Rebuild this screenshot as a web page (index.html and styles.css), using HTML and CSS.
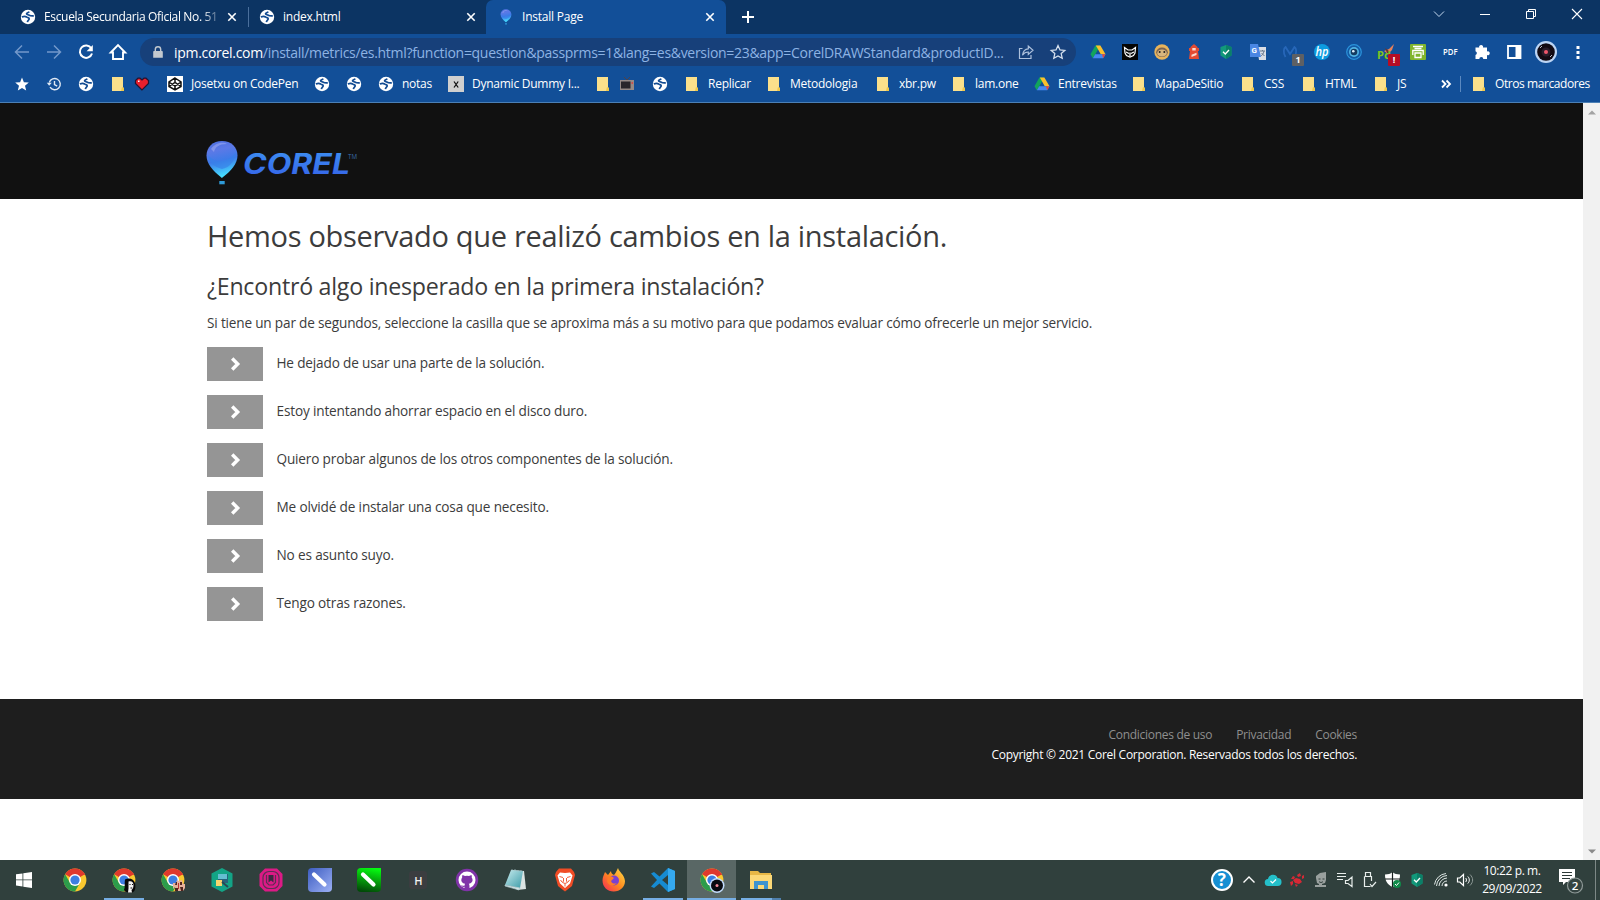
FILE: index.html
```html
<!DOCTYPE html>
<html lang="es">
<head>
<meta charset="utf-8">
<title>Install Page</title>
<link rel="stylesheet" href="styles.css">
</head>
<body>
<svg class="defs" width="0" height="0">
  <defs>
    <linearGradient id="balloonFill" x1="0" y1="0" x2="0.2" y2="1"><stop offset="0" stop-color="#4b6fe0"/><stop offset=".3" stop-color="#5c79e6"/><stop offset=".6" stop-color="#3d7be8"/><stop offset="1" stop-color="#45dcff"/></linearGradient>
    <linearGradient id="corelFill" x1="0" y1="0" x2="0" y2="1"><stop offset="0" stop-color="#3d93f2"/><stop offset="1" stop-color="#3560e8"/></linearGradient>
    <linearGradient id="noteFill" x1="0" y1="0" x2="1" y2="1"><stop offset="0" stop-color="#c8ecee"/><stop offset="1" stop-color="#3c9ba8"/></linearGradient>
    <linearGradient id="foxFill" x1="1" y1="0" x2="0" y2="1"><stop offset="0" stop-color="#ffe14a"/><stop offset=".5" stop-color="#ff8a1e"/><stop offset="1" stop-color="#f5245a"/></linearGradient>
    <linearGradient id="greenFill" x1="0.6" y1="0" x2="0.4" y2="1"><stop offset="0" stop-color="#04fb10"/><stop offset=".45" stop-color="#06a80c"/><stop offset="1" stop-color="#024a08"/></linearGradient>
    <linearGradient id="violetFill" x1="0" y1="0" x2="1" y2="1"><stop offset="0" stop-color="#3c5cc0"/><stop offset="1" stop-color="#9db1f5"/></linearGradient>
  </defs>
  <symbol id="globe" viewBox="0 0 16 16"><circle cx="8" cy="8" r="7.200" fill="#fff"/><path d="M1.800 8C4 7 5.600 7.200 6.600 8c1 1 2.600 .4 2.600 1.800C9.200 11.200 7.600 11 7.400 13.200M9.200 2.600C8.600 3.800 6.600 3.600 6.500 4.800c0 1 1.800 .8 2.800 1.500 1 .7 2.200 .8 4.500 .6" fill="none" stroke="#124b92" stroke-width="1.700"/></symbol>
  <symbol id="folder" viewBox="0 0 16 16"><path d="M2 1h11v10l1 1.500V15H2z" fill="#fbe08b"/><path d="M12 11l2 1v3h-3z" fill="#efc84c"/></symbol>
  <symbol id="drive" viewBox="0 0 16 16"><path d="M5.400 1.500h4.800L5 10.700 2.800 14.200.5 10.200z" fill="#12a45c"/><path d="M5.800 1.500h4.600l5.100 8.800h-4.700z" fill="#fbc02d"/><path d="M5.200 10.300h10.300l-2.300 4H2.800z" fill="#4688f1"/><path d="M12 10.300h3.500l-2.300 4z" fill="#e8473a"/></symbol>
  <symbol id="close" viewBox="0 0 10 10"><path d="M1.300 1.300l7.400 7.400M8.700 1.300L1.300 8.700" stroke="#fff" stroke-width="1.600"/></symbol>
  <symbol id="balloon" viewBox="0 0 32 46"><path d="M16 1C7 1 .5 7 .5 15.500.5 24 7 31 15.900 38 25 31 31.500 24 31.500 15.500 31.500 7 25 1 16 1z" fill="url(#balloonFill)"/><path d="M2 15c8 10 20 8 28-3-1 8-5 15-14 17C8 27 3 22 2 15z" fill="#377fe8" opacity=".65"/><path d="M5 9c5-7 13-7 16-5-8 0-12 3-13 8z" fill="#a9b1f3" opacity=".5"/><path d="M13.300 41h5.400v3.300h-5.400z" fill="#2f9bd8"/></symbol>
  <symbol id="chrome" viewBox="0 0 24 24"><circle cx="12" cy="12" r="11.400" fill="#f9c82f"/><path d="M12 12L2.100 6.300A11.400 11.400 0 0 1 21.900 6.300z" fill="#e0392d"/><path d="M2.100 6.300A11.400 11.400 0 0 0 12 23.400l5-8.700H7z" fill="#2c9c4b"/><path d="M12 6.300h9.900" stroke="#e0392d"/><circle cx="12" cy="12" r="6" fill="#fff"/><circle cx="12" cy="12" r="4.600" fill="#3d7ee2"/></symbol>
  <symbol id="shield" viewBox="0 0 16 16"><path d="M8 1l5.500 2v8.500L8 15l-5.500-3.500V3z" fill="#12997b"/><path d="M8 1l5.500 2v8.500L8 15z" fill="#0b8068"/><path d="M5 7.800l2.300 2.200L11 6" fill="none" stroke="#fff" stroke-width="1.300"/></symbol>
</svg>

<div class="browser">
  <div class="tabs">
    <div class="tab tab-first"><svg class="i16"><use href="#globe"/></svg><span class="tab-title fade">Escuela Secundaria Oficial No. 51</span><svg class="x"><use href="#close"/></svg></div>
    <div class="tab tab-second"><svg class="i16"><use href="#globe"/></svg><span class="tab-title">index.html</span><svg class="x"><use href="#close"/></svg></div>
    <div class="tab tab-active"><svg class="i16"><use href="#balloon"/></svg><span class="tab-title">Install Page</span><svg class="x"><use href="#close"/></svg></div>
    <svg class="plus" viewBox="0 0 12 12"><path d="M6 0v12M0 6h12" stroke="#fff" stroke-width="2"/></svg>
    <div class="window-buttons">
      <svg viewBox="0 0 12 12"><path d="M1 3.500l5 5 5-5" fill="none" stroke="#c4d8ef"/></svg>
      <svg viewBox="0 0 12 12"><path d="M1 6.500h10" stroke="#fff"/></svg>
      <svg viewBox="0 0 12 12"><path d="M1.500 3.500h7v7h-7zM3.500 3.500v-2h7v7h-2" fill="none" stroke="#fff"/></svg>
      <svg viewBox="0 0 12 12"><path d="M1 1l10 10M11 1L1 11" stroke="#fff" stroke-width="1.100"/></svg>
    </div>
  </div>

  <div class="toolbar">
    <div class="nav">
      <svg viewBox="0 0 16 16"><path d="M15 8H1.500M8 1.500L1.500 8 8 14.500" fill="none" stroke="#7398ca" stroke-width="1.500"/></svg>
      <svg viewBox="0 0 16 16"><path d="M1 8h13.500M8 1.500L14.500 8 8 14.500" fill="none" stroke="#7398ca" stroke-width="1.500"/></svg>
      <svg viewBox="0 0 16 16"><path d="M13.300 4.300A6.200 6.200 0 1 0 14 9.500" fill="none" stroke="#fff" stroke-width="2"/><path d="M14.800 1v6.200H8.600z" fill="#fff"/></svg>
      <svg viewBox="0 0 16 16"><path d="M.8 8.500L8 1.200l7.200 7.300H13V15H3V8.500z" fill="none" stroke="#fff" stroke-width="1.900"/></svg>
    </div>
    <div class="omnibox">
      <svg class="lock" viewBox="0 0 10 13"><path d="M1 5h8a.8.8 0 0 1 .8.800v5.900H.2V5.800A.8.8 0 0 1 1 5z" fill="#c3c8cf"/><path d="M2.300 5.500V3.500a2.700 2.700 0 0 1 5.400 0v2" fill="none" stroke="#c3c8cf" stroke-width="1.400"/></svg>
      <span class="url"><b>ipm.corel.com</b>/install/metrics/es.html?function=question&amp;passprms=1&amp;lang=es&amp;version=23&amp;app=CorelDRAWStandard&amp;productID...</span>
      <svg class="share" viewBox="0 0 16 16"><path d="M4.500 4.500H1.500v10h11.500V11M4.500 11.200C5 7 7 5 10.300 4.800V2L15 6.300l-4.700 4.200V8C8 8 6 8.800 4.500 11.200z" fill="none" stroke="#adc0dc" stroke-width="1.200"/></svg>
      <svg class="fav" viewBox="0 0 16 16"><path d="M8 1.500l2 4.400 4.800.5-3.600 3.200 1 4.700L8 11.900l-4.200 2.400 1-4.700L1.200 6.400 6 5.900z" fill="none" stroke="#d6e0ee" stroke-width="1.300"/></svg>
    </div>
    <div class="extensions">
      <svg viewBox="0 0 16 16"><use href="#drive"/></svg>
      <svg viewBox="0 0 16 16"><path d="M0 0h16v16H0z" fill="#050505"/><path d="M2.500 3.500L6 6h4l3.500-2.500-.5 5.500-1.500 2.500L8 13l-3.500-1.500L3 9z" fill="none" stroke="#fff" stroke-width="1.200"/><path d="M4 8l3 1.500M12 8L9 9.500M8 8.500V12" stroke="#fff" stroke-width="1.300"/></svg>
      <svg viewBox="0 0 16 16"><circle cx="8" cy="8" r="7.700" fill="#e8b45b"/><ellipse cx="8" cy="8.300" rx="5.800" ry="4.800" fill="#7c6450"/><ellipse cx="8" cy="9" rx="4.800" ry="3.600" fill="#d9b67d"/><circle cx="5.700" cy="8" r="1" fill="#222"/><circle cx="10.300" cy="8" r="1" fill="#222"/></svg>
      <svg viewBox="0 0 16 16"><path d="M4.500 3L8 0l3.500 3v1H13v3h-1l1 8H3l1-8H3V4h1.500z" fill="#e34a32"/><path d="M6.300 4h3.400v2.500H6.300zM5.500 10.800l5-2v2.200l-5 2z" fill="#f8d9d0"/></svg>
      <svg viewBox="0 0 16 16"><use href="#shield"/></svg>
      <svg viewBox="0 0 16 16"><path d="M7 3h9v13H9z" fill="#d9dde5"/><path d="M0 0h8l3 13H0z" fill="#4a86e3"/><text x="1.500" y="9" font-size="8" font-weight="700" fill="#fff" font-family="Roboto">G</text><path d="M10 7h5M12.500 6v1M14 7c-.5 3-2 4-3 5M11.500 9l3 3" stroke="#69788d" fill="none"/></svg>
      <div class="badged"><svg viewBox="0 0 16 16"><path d="M3.500 13C1 9 1.500 4 3.500 3L8 10l4.500-7C14.500 4 15 9 12.500 13" fill="none" stroke="#2767b9" stroke-width="1.800"/></svg><span class="badge gray">1</span></div>
      <svg viewBox="0 0 16 16"><circle cx="8" cy="8" r="8" fill="#0c9be0"/><text x="1.500" y="11.500" font-size="12" font-style="italic" font-weight="600" fill="#fff" font-family="Open Sans" textLength="13" lengthAdjust="spacingAndGlyphs">hp</text></svg>
      <svg viewBox="0 0 16 16"><circle cx="8" cy="8" r="7.300" fill="#135aa5" stroke="#2b94dc" stroke-width="1.200"/><circle cx="8" cy="8" r="5" fill="#52b3e3"/><circle cx="8" cy="8" r="3.300" fill="#143b61"/><circle cx="7.300" cy="7.300" r="1.300" fill="#dceefa"/></svg>
      <div class="badged"><svg viewBox="0 0 16 16"><path d="M6 7l5-2 5-5-2 6-4 4z" fill="#e98058"/><path d="M7 4l3 2 2 3H9z" fill="#6b382c"/><text x="-1" y="15" font-size="11" font-weight="700" fill="#7ec51f" font-family="Open Sans">Pd</text></svg><span class="badge red">!</span></div>
      <svg viewBox="0 0 16 16"><rect width="16" height="16" rx="1" fill="#80b52d"/><path d="M3 2.500h10M4.500 4.500h7M2.800 11V6.500h10.400V11M5 9h6v4.500H5z" fill="none" stroke="#fff" stroke-width="1.300"/></svg>
      <svg viewBox="0 0 16 16"><text x="1" y="11" font-size="8" font-weight="600" fill="#fff" font-family="Open Sans" textLength="14.500" lengthAdjust="spacingAndGlyphs">PDF</text></svg>
      <svg viewBox="0 0 16 16"><path d="M1.500 3.500h3.700a2 2 0 1 1 3.800 0h4v3.900a2 2 0 1 1 0 3.700V15H9.300a2 2 0 0 0-4 0H1.500v-4a2 2 0 0 0 0-3.800z" fill="#fff"/></svg>
      <svg viewBox="0 0 16 16"><path d="M2 2h12.500v12H2z" fill="none" stroke="#fff" stroke-width="1.800"/><path d="M9.500 2h4.500v12H9.500z" fill="#fff"/></svg>
      <svg class="avatar" viewBox="0 0 22 22"><circle cx="11" cy="11" r="11" fill="#bcd5f5"/><circle cx="11" cy="11" r="8.800" fill="#120a12"/><circle cx="11" cy="11" r="4.500" fill="#291c29"/><circle cx="11" cy="11" r="2" fill="#f0566b"/><path d="M5 7l2-2M15 16l2-2" stroke="#b9bdc9"/></svg>
      <svg viewBox="0 0 16 16"><path d="M6.500 2h3v3h-3zM6.500 7h3v3h-3zM6.500 12h3v3h-3z" fill="#fff"/></svg>
    </div>
  </div>

  <div class="bookmarks">
    <a><svg viewBox="0 0 16 16"><path d="M8 1.500l1.900 4.700 4.900.3-3.800 3.200 1.200 4.900L8 11.900l-4.200 2.700L5 9.700 1.200 6.500l4.900-.3z" fill="#fff"/></svg></a>
    <a><svg viewBox="0 0 16 16"><path d="M3.300 6.500A5.600 5.600 0 1 1 4 11.200M8.500 5v3.500l2.700 1.600" fill="none" stroke="#e0e9f4" stroke-width="1.400"/><path d="M.8 6.800h5L3.200 9.700z" fill="#e0e9f4"/></svg></a>
    <a><svg><use href="#globe"/></svg></a>
    <a><svg><use href="#folder"/></svg><svg viewBox="0 0 16 16"><path d="M8 14L1.500 7.500v-3L4 2.200h2L8 4l2-1.800h2l2.500 2.300v3z" fill="#e9202d" stroke="#241431" stroke-width="1.200"/><path d="M4 4.500h1.500V6H4z" fill="#fff"/></svg></a>
    <a class="m17"><svg viewBox="0 0 16 16"><path d="M0 0h16v16H0z" fill="#fff"/><path d="M8 2l6 4v4.500L8 14l-6-3.500V6zM2 6l6 4 6-4M2 10.500l6-4 6 4M8 2v4.300M8 10v4" fill="none" stroke="#111" stroke-width="1.500"/></svg><span style="width:106px">Josetxu on CodePen</span></a>
    <a class="m17"><svg><use href="#globe"/></svg></a>
    <a><svg><use href="#globe"/></svg></a>
    <a><svg><use href="#globe"/></svg><span style="width:29px">notas</span></a>
    <a class="m17"><svg viewBox="0 0 16 16"><path d="M0 0h16v16H0z" fill="#cfcfcf"/><path d="M6 5.500l4.200 6M10.200 5.500L6 11.500" stroke="#111" stroke-width="1.300"/></svg><span style="width:106px">Dynamic Dummy I...</span></a>
    <a class="m17"><svg><use href="#folder"/></svg><svg viewBox="0 0 16 16"><path d="M5 1l3 3 3-3" fill="none" stroke="#514248"/><path d="M1 4h14v10H1z" fill="#958a87"/><path d="M2 5.500h9.500v7H2z" fill="#29262b"/><path d="M12.500 6h1.500v2h-1.500z" fill="#ce4a4a"/></svg></a>
    <a class="m17"><svg><use href="#globe"/></svg></a>
    <a><svg><use href="#folder"/></svg><span style="width:42px">Replicar</span></a>
    <a><svg><use href="#folder"/></svg><span style="width:68px">Metodologia</span></a>
    <a class="m17"><svg><use href="#folder"/></svg><span style="width:36px">xbr.pw</span></a>
    <a><svg><use href="#folder"/></svg><span style="width:42px">lam.one</span></a>
    <a class="m17"><svg><use href="#drive"/></svg><span style="width:56px">Entrevistas</span></a>
    <a class="m17"><svg><use href="#folder"/></svg><span style="width:68px">MapaDeSitio</span></a>
    <a class="m17"><svg><use href="#folder"/></svg><span style="width:20px">CSS</span></a>
    <a class="m17"><svg><use href="#folder"/></svg><span style="width:31px">HTML</span></a>
    <a class="m17"><svg><use href="#folder"/></svg><span style="width:11px">JS</span></a>
    <div class="others"><svg viewBox="0 0 16 16"><path d="M4 4.500L7.500 8 4 11.500M8.500 4.500L12 8l-3.500 3.500" fill="none" stroke="#fff" stroke-width="1.800"/></svg><i></i><a><svg><use href="#folder"/></svg><span class="others-label">Otros marcadores</span></a></div>
  </div>

  <div class="viewport">
    <div class="page">
      <header>
        <svg class="logo" viewBox="0 0 152 46" width="152" height="46">
          <use href="#balloon" width="32" height="46"/>
          <text x="37" y="34" class="logo-word" fill="url(#corelFill)" textLength="107" lengthAdjust="spacingAndGlyphs">COREL</text>
          <text x="142" y="19" class="logo-tm" fill="#3a6fae" textLength="9" lengthAdjust="spacingAndGlyphs">TM</text>
        </svg>
      </header>
      <main>
        <h1>Hemos observado que realizó cambios en la instalación.</h1>
        <h2>¿Encontró algo inesperado en la primera instalación?</h2>
        <p class="intro">Si tiene un par de segundos, seleccione la casilla que se aproxima más a su motivo para que podamos evaluar cómo ofrecerle un mejor servicio.</p>
        <ul class="options">
          <li><button><svg viewBox="0 0 10 14"><path d="M1.200 1.500L6.700 7l-5.500 5.500" /></svg></button><span>He dejado de usar una parte de la solución.</span></li>
          <li><button><svg viewBox="0 0 10 14"><path d="M1.200 1.500L6.700 7l-5.500 5.500" /></svg></button><span>Estoy intentando ahorrar espacio en el disco duro.</span></li>
          <li><button><svg viewBox="0 0 10 14"><path d="M1.200 1.500L6.700 7l-5.500 5.500" /></svg></button><span>Quiero probar algunos de los otros componentes de la solución.</span></li>
          <li><button><svg viewBox="0 0 10 14"><path d="M1.200 1.500L6.700 7l-5.500 5.500" /></svg></button><span>Me olvidé de instalar una cosa que necesito.</span></li>
          <li><button><svg viewBox="0 0 10 14"><path d="M1.200 1.500L6.700 7l-5.500 5.500" /></svg></button><span>No es asunto suyo.</span></li>
          <li><button><svg viewBox="0 0 10 14"><path d="M1.200 1.500L6.700 7l-5.500 5.500" /></svg></button><span>Tengo otras razones.</span></li>
        </ul>
      </main>
      <footer>
        <nav><a>Condiciones de uso</a><a>Privacidad</a><a>Cookies</a></nav>
        <p>Copyright © 2021 Corel Corporation. Reservados todos los derechos.</p>
      </footer>
    </div>
    <div class="scrollbar"><svg viewBox="0 0 8 5"><path d="M0 4.500L4 .5l4 4z" fill="#a3a3a3"/></svg><svg viewBox="0 0 8 5"><path d="M0 .5l4 4 4-4z" fill="#8a8a8a"/></svg></div>
  </div>
</div>

<div class="taskbar">
  <div class="start"><svg viewBox="0 0 16 16" width="16" height="16"><path d="M0 2.300l6.500-.9v6.100H0zM7.300 1.300L16 0v7.500H7.300zM0 8.300h6.500v6.200L0 13.600zM7.300 8.300H16V16l-8.700-1.300z" fill="#fff"/></svg></div>
  <div class="apps">
    <div><svg><use href="#chrome"/></svg></div>
    <div class="open"><svg viewBox="0 0 24 24"><use href="#chrome"/><path d="M13 11.500c4-2.500 9-.5 10 3.500.8 4 .5 9-3 9.500-3 .3-7-.5-8-2.500 1.500-3 .2-7 1-10.500z" fill="#080808"/><path d="M16.500 13.500c3-1 5 .5 5 3.500 0 2-.5 4-2 5l.5 2.500h-4l.5-4z" fill="#f2f2f2"/><path d="M17.500 16.500h1M20 16.500h1M18.500 20h1.700" stroke="#111"/></svg></div>
    <div><svg viewBox="0 0 24 24"><use href="#chrome"/><path d="M12 15h3l1-3 2 1 3-1 1 4h2v4l-2 3h-7l-1-4-2 2z" fill="#e6b19b"/><path d="M15 14h1v3h-2zM19 14h2v3h-2zM14 20h3v3h-3zM19 19h3v4h-2z" fill="#51251f"/><path d="M17 15h1v6h-1z" fill="#b83232"/></svg></div>
    <div><svg viewBox="0 0 24 24"><path d="M12 0l10.500 5.500v13L12 24 1.500 18.500v-13z" fill="#13a486"/><path d="M8 6h10v9H8z" fill="#28637a"/><path d="M8 6h9v5H8z" fill="#64bfd1"/><path d="M6 12h6v6H6z" fill="#f7d56e"/><path d="M12 14l6 5" stroke="#274955" stroke-width="2"/></svg></div>
    <div><svg viewBox="0 0 24 24"><path d="M6 .500h12l5.500 5.500v12L18 23.500H6L.5 18V6z" fill="#dc1a86"/><rect x="4" y="3.500" width="16" height="17" rx="6" fill="none" stroke="#5d2f53" stroke-width="1.200"/><path d="M7.500 7v7.500L10 17h4l2.500-2.500V7" fill="none" stroke="#5d2f53" stroke-width="1.200"/><path d="M9.500 7h5v7.500L12 12.500l-2.500 2z" fill="#3b2a41"/></svg></div>
    <div><svg viewBox="0 0 24 24"><path d="M4 0h20v20a4 4 0 0 1-4 4H4a4 4 0 0 1-4-4V4a4 4 0 0 1 4-4z" fill="url(#violetFill)"/><path d="M6 6.500l10.500 10" stroke="#fff" stroke-width="4.200" stroke-linecap="round"/></svg></div>
    <div><svg viewBox="0 0 24 24"><path d="M4 0h20v20a4 4 0 0 1-4 4H4a4 4 0 0 1-4-4V4a4 4 0 0 1 4-4z" fill="url(#greenFill)"/><path d="M6 6.500l10.500 10" stroke="#fff" stroke-width="4.200" stroke-linecap="round"/></svg></div>
    <div><svg viewBox="0 0 24 24"><rect x="3" y="3" width="18" height="18" rx="3" fill="#3b3d40"/><text x="8.200" y="16.800" font-family="Open Sans" font-size="11" font-weight="600" fill="#f1f1f1">H</text></svg></div>
    <div><svg viewBox="0 0 24 24"><circle cx="12" cy="12" r="11.200" fill="#8033a8"/><circle cx="12" cy="12" r="8.500" fill="#fff"/><path d="M7.500 7l2.500 1a8 8 0 0 1 4 0l2.500-1c.4 1 .4 1.700.2 2.500 2 3 .4 5.800-2.900 6.200.8.800.7 2 .7 5.300h-5v-2.200c-2 .4-2.700-.6-3.500-1.900 1 .1 1.500 1.300 3.500.8 0-.8.200-1.500.6-2-3.300-.4-4.900-3.200-2.900-6.200-.2-.8-.100-1.500.3-2.500z" fill="#8033a8"/></svg></div>
    <div><svg viewBox="0 0 24 24"><path d="M7 2l13 1 2 18-9 1z" fill="#dbe4e3"/><path d="M7 2l12 1-3 17L1 17z" fill="url(#noteFill)"/><path d="M1 17l15 3-1 2-14-4zM8 1v2M11 1v2M14 2v2M17 2v2" fill="#d4e4e5" stroke="#a9c6ca" stroke-width=".7"/></svg></div>
    <div><svg viewBox="0 0 24 24"><path d="M6 .500h12l3 3.500 1 3-3 11-7 5.500L5 18 2 7l1-3z" fill="#f04c25"/><path d="M7 4.500l5 .5 5-.5 2.500 3-1.500 5-1 3-5 4.500-5-4.500-1-3-1.500-5z" fill="#fff"/><path d="M6.500 8.500l3.500 1M17.500 8.500L14 9.500M10.500 10v3l-1 1.500 2.500 1 2.500-1-1-1.500v-3M7.500 12l1.500 2M16.500 12L15 14M12 16v2.500" fill="none" stroke="#f04c25" stroke-width=".9"/></svg></div>
    <div><svg viewBox="0 0 24 24"><path d="M3 4l3 3 3-4c0 2 1 3 3 4 1-1 2-3 4-7 1 4 6 6 7 13 0 6-5 10.500-11.300 10.500S.5 19 .5 12.500C.5 9 2 7 3 4z" fill="url(#foxFill)"/><circle cx="12" cy="12.500" r="5" fill="#7a41d0"/><path d="M6 9c3-1 5 0 6 1l-3 3c1 3 4 3 6 2-3 4-9 3-10-2z" fill="#ff7c27"/></svg></div>
    <div class="open"><svg viewBox="0 0 24 24"><path d="M17 0l7 3v18l-7 3L8.500 15.500 3 20l-3-1.500L6 12 0 5.500 3 4l5.500 4.500zM17 7l-6 5 6 5z" fill="#168bd2" fill-rule="evenodd"/><path d="M17 0l7 3v18l-7 3z" fill="#35a9ef"/></svg></div>
    <div class="active"><svg viewBox="0 0 24 24"><use href="#chrome"/><circle cx="17" cy="17.500" r="7.500" fill="#c1dbfb"/><circle cx="17" cy="17.500" r="6" fill="#080a10"/><circle cx="17" cy="17.500" r="1.500" fill="#f38895"/></svg></div>
    <div class="open multi"><svg viewBox="0 0 24 24"><path d="M1 3h8l2 2h11v16H1z" fill="#e7b746"/><path d="M1 7h22v14H1z" fill="#fbd877"/><path d="M5 13h14v8h-4v-4H9v4H5z" fill="#3e93cf"/></svg></div>
  </div>
  <div class="tray">
    <svg class="help" viewBox="0 0 22 22"><circle cx="11" cy="11" r="10" fill="#168fd3" stroke="#fff" stroke-width="2"/><text x="6.800" y="17" font-family="Open Sans" font-size="17" font-weight="700" fill="#fff">?</text></svg>
    <svg viewBox="0 0 16 16"><path d="M2.500 10.500L8 5l5.500 5.500" fill="none" stroke="#fff" stroke-width="1.400"/></svg>
    <svg viewBox="0 0 16 16"><path d="M3.500 14a3.500 3.500 0 0 1-.5-7 5 5 0 0 1 9.600-1A4 4 0 0 1 12.500 14z" fill="#24bfc9"/><path d="M5.500 9l2 2 3.500-3.500" fill="none" stroke="#fff" stroke-width="1.200"/></svg>
    <svg viewBox="0 0 16 16"><path d="M4 8l3-2 4 1 2 3-3 2-4-1zM8 3l3-2 1 3-3 1zM13 4l2-1v3l-2 1zM1 10l3-1v3l-2 2zM6 12l3 1-2 2zM4 4l2 1-1 2-3 0z" fill="#d72835"/></svg>
    <svg viewBox="0 0 16 16"><path d="M3 6V4l4-3 6-1v8l-1 3-3 1v1h4v2H2v-2h4v-1L4 11z" fill="#99a09e"/><path d="M5.500 7h2M9.500 7h2M6 9.500c1 1.300 3 1.300 4 0" fill="none" stroke="#34413f"/></svg>
    <svg viewBox="0 0 16 16"><path d="M0 1.500h9M0 4.500h9M0 7.500h6M8.500 8.500h2.500l4-3.500v9.500L11 11.500H8.500z" fill="none" stroke="#e8eeec" stroke-width="1.200"/></svg>
    <svg viewBox="0 0 16 16"><path d="M3.500 4.500h7V9M3.500 4.500v10h6M4.500 4.500v-4h5v4M9 12l2 2.500 4-4.500" fill="none" stroke="#e8eeec" stroke-width="1.200"/></svg>
    <svg viewBox="0 0 16 16"><path d="M7.500 0C9.500 2 12 2.300 15 2.500c0 6-2 10-7.500 12.500C2 12.500 0 8.500 0 2.500 3 2.300 5.500 2 7.500 0z" fill="#fff"/><path d="M7.500 0v15M0 7h15" stroke="#18201f" stroke-width="1.200"/><circle cx="12" cy="12" r="4" fill="#108b4a"/><path d="M10 12l1.500 1.500 2.500-3" stroke="#fff" fill="none"/></svg>
    <svg viewBox="0 0 16 16"><use href="#shield"/></svg>
    <svg viewBox="0 0 16 16"><path d="M6 14A8.500 8.500 0 0 1 14 6M9 14a5 5 0 0 1 5-5M3.500 14A11 11 0 0 1 14 3.500M1.500 12.500A13 13 0 0 1 13 1.500" fill="none" stroke="#dce5e3"/><circle cx="13" cy="13" r="1.600" fill="#fff"/></svg>
    <svg viewBox="0 0 16 16"><path d="M.5 6h2.300L6.500 2.500v11L2.800 10H.5z" fill="none" stroke="#fff" stroke-width="1.200"/><path d="M8.700 6c1 1.200 1 2.800 0 4M10.800 4.500c2 2 2 5 0 7" fill="none" stroke="#fff"/><path d="M13 2.500c3.500 3.500 3.500 7.500 0 11" fill="none" stroke="#8d9996"/></svg>
    <div class="clock"><span>10:22 p. m.</span><span>29/09/2022</span></div>
    <svg class="notice" viewBox="0 0 26 26"><path d="M1 1h16v13H8l-3 3v-3H1z" fill="#fff"/><path d="M4 4.500h10M4 7.500h10M4 10.500h8" stroke="#2c3938" stroke-width="1.100"/><circle cx="17" cy="17.500" r="7.500" fill="#344341" stroke="#8f9a98" stroke-width="1.200"/><text x="13.800" y="21.800" font-family="Open Sans" font-size="11.500" font-weight="600" fill="#fff">2</text></svg>
    <div class="show-desktop"></div>
  </div>
</div>
</body>
</html>
```

FILE: styles.css
```css
* { box-sizing: border-box; }
body { margin: 0; width: 1600px; height: 900px; overflow: hidden; display: flex; flex-direction: column; font-family: "Segoe UI", "Open Sans", "Noto Sans", sans-serif; font-size: 14px; color: #3c3c3c; background: #fff; }
.defs { position: absolute; }
svg { display: block; flex: none; overflow: visible; }
.browser { height: 860px; display: flex; flex-direction: column; }

.tabs { height: 34px; flex: none; background: #0c3463; display: flex; align-items: flex-start; color: #fff; }
.tab { height: 34px; display: flex; align-items: center; gap: 8px; padding-bottom: 1px; font-size: 12px; letter-spacing: -.22px; }
.tab svg.i16 { width: 16px; height: 16px; }
.tab svg.x { width: 10px; height: 10px; margin-left: auto; }
.tab-title { white-space: nowrap; margin-top: -1px; }
.tab-first { width: 248px; padding-left: 20px; padding-right: 11px; letter-spacing: -.34px; }
.tab-first .tab-title { width: 176px; }
.fade { -webkit-mask-image: linear-gradient(90deg, #000 90%, rgba(0,0,0,.2)); mask-image: linear-gradient(90deg, #000 90%, rgba(0,0,0,.2)); }
.tab-second { width: 238px; padding-left: 11px; padding-right: 10px; background: linear-gradient(#4a6f9c, #4a6f9c) 0 50% / 1px 20px no-repeat; }
.tab-active { width: 240px; padding-left: 12px; padding-right: 11px; background: #124f98; border-radius: 7px 7px 0 0; }
.plus { width: 12px; height: 12px; margin: 11px 0 0 16px; }
.window-buttons { margin: 8px 17px 0 auto; display: flex; gap: 34px; }
.window-buttons svg { width: 12px; height: 12px; }

.toolbar { height: 34px; flex: none; background: #124f98; display: flex; align-items: center; padding: 2px 6px 0; }
.nav { display: flex; gap: 16px; padding-left: 8px; margin-right: 14px; }
.nav svg { width: 16px; height: 16px; }
.omnibox { width: 936px; height: 28px; border-radius: 14px; background: #17407a; display: flex; align-items: center; padding: 0 10px 0 13px; }
.lock { width: 10px; height: 13px; }
.url { width: 840px; margin-left: 11px; font-size: 14px; color: #8db3e4; white-space: nowrap; letter-spacing: -.3px; }
.url b { font-weight: 400; color: #fff; }
.share { width: 16px; height: 16px; margin-left: 4px; }
.fav { width: 16px; height: 16px; margin-left: 16px; }
.extensions { display: flex; align-items: center; gap: 16px; margin-left: 14px; }
.extensions svg { width: 16px; height: 16px; }
.extensions svg.avatar { width: 22px; height: 22px; margin: 0 -3px; }
.badged { position: relative; }
.badge { position: absolute; left: 10px; top: 10px; width: 12px; height: 12px; border-radius: 1px; color: #fff; font: 700 9px/12px "Open Sans", sans-serif; text-align: center; }
.gray { background: #5e6063; }
.red { background: #b50d25; }

.bookmarks { height: 35px; flex: none; background: #124f98; border-bottom: 1px solid #4c80b5; display: flex; align-items: center; gap: 16px; padding: 0 11px 2px 14px; color: #fff; font-size: 12px; letter-spacing: -.25px; }
.bookmarks a { display: flex; align-items: center; gap: 8px; }
.bookmarks svg { width: 16px; height: 16px; }
.bookmarks span { display: block; white-space: nowrap; margin-top: -1px; }
.bookmarks .m17 { margin-left: 1px; }
.others { margin-left: auto; display: flex; align-items: center; }
.others i { width: 1px; height: 16px; background: #5b89c0; margin: 0 10px 0 6px; }
.others-label { width: 94px; letter-spacing: -.42px; }

.viewport { flex: 1; display: flex; min-height: 0; }
.page { flex: 1; background: #fff; }
.scrollbar { width: 17px; background: #f1f1f1; display: flex; flex-direction: column; justify-content: space-between; align-items: center; padding: 7px 0 6px; }
.scrollbar svg { width: 8px; height: 5px; }
header { height: 96px; background: #111; padding: 37px 0 0 206px; }
.logo-word { font: italic 750 28px Inter, sans-serif; }
.logo-tm { font: 7px "Open Sans", sans-serif; }
main { height: 500px; padding: 20px 207px 0; }
h1, h2 { margin: 0; font-weight: 400; white-space: nowrap; }
h1 { font-size: 29px; line-height: 33px; letter-spacing: -.31px; }
h2 { font-size: 23.2px; line-height: 26px; margin-top: 21px; letter-spacing: -.25px; }
.intro { margin: 14px 0 0; font-size: 13.6px; letter-spacing: -.18px; line-height: 20px; white-space: nowrap; }
.options { list-style: none; margin: 14px 0 0; padding: 0; display: flex; flex-direction: column; gap: 14px; font-size: 13.6px; letter-spacing: -.16px; }
.options li { height: 34px; display: flex; align-items: center; gap: 13.500px; line-height: 20px; }
.options span { margin-top: -2px; }
.options button { width: 56px; height: 34px; border: 0; padding: 0 0 0 2px; background: #959595; display: flex; align-items: center; justify-content: center; }
.options button svg { width: 10px; height: 14px; }
.options path { fill: none; stroke: #fff; stroke-width: 3.4px; }
footer { height: 100px; background: #1e1e1e; padding: 26px 226px 0 0; text-align: right; font-size: 12px; line-height: 20px; color: #fff; }
footer nav { display: flex; justify-content: flex-end; gap: 24px; color: #8f8f8f; letter-spacing: -.29px; }
footer p { margin: 0; letter-spacing: -.28px; }

.taskbar { height: 40px; background: #30403d; display: flex; color: #fff; }
.start { width: 50px; display: flex; align-items: center; justify-content: center; padding-right: 2px; }
.apps { display: flex; }
.apps > div { width: 49px; height: 40px; display: flex; align-items: center; justify-content: center; }
.apps svg { width: 24px; height: 24px; }
.open { background: linear-gradient(#76aee4, #76aee4) 50% 100% / 40px 2px no-repeat; }
.multi { background: linear-gradient(90deg, #76aee4 31px, #4f7fad 31px) 50% 100% / 40px 2px no-repeat; }
.apps .active { background: linear-gradient(#76aee4, #76aee4) 0 100% / 100% 2px no-repeat #596765; }
.tray { margin-left: auto; display: flex; align-items: center; gap: 8px; }
.tray > svg { width: 16px; height: 16px; }
.tray > svg.help { width: 22px; height: 22px; }
.clock { width: 60px; margin-left: 1px; display: flex; flex-direction: column; align-items: center; font-size: 12px; line-height: 18px; letter-spacing: -.4px; white-space: nowrap; }
.tray > svg.notice { width: 26px; height: 26px; margin: 2px 3px 0 8px; }
.show-desktop { width: 5px; height: 40px; border-left: 1px solid #7d8886; }
```
